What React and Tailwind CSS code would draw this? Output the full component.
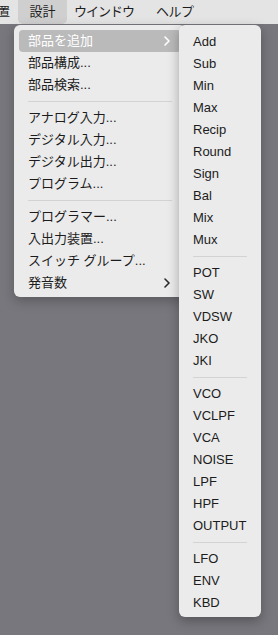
import React from 'react';

const mainItems = [
  { label: '部品を追加', sub: true, active: true },
  { label: '部品構成...' },
  { label: '部品検索...' },
  'sep',
  { label: 'アナログ入力...' },
  { label: 'デジタル入力...' },
  { label: 'デジタル出力...' },
  { label: 'プログラム...' },
  'sep',
  { label: 'プログラマー...' },
  { label: '入出力装置...' },
  { label: 'スイッチ グループ...' },
  { label: '発音数', sub: true },
];

const subItems = [
  'Add', 'Sub', 'Min', 'Max', 'Recip', 'Round', 'Sign', 'Bal', 'Mix', 'Mux',
  'sep',
  'POT', 'SW', 'VDSW', 'JKO', 'JKI',
  'sep',
  'VCO', 'VCLPF', 'VCA', 'NOISE', 'LPF', 'HPF', 'OUTPUT',
  'sep',
  'LFO', 'ENV', 'KBD',
];

const Chevron = ({ white }) => (
  <svg width="6" height="10" viewBox="0 0 6 10" fill="none">
    <path
      d="M1 1l4 4-4 4"
      stroke={white ? '#ffffff' : '#2a2a2a'}
      strokeWidth="1.6"
      strokeLinecap="round"
      strokeLinejoin="round"
    />
  </svg>
);

const font = { fontFamily: '"Liberation Sans", "Noto Sans CJK JP", sans-serif' };

export default function App() {
  return (
    <div
      className="relative w-[278px] h-[635px] overflow-hidden bg-[#77777d] text-[13px]"
      style={font}
    >
      {/* menu bar */}
      <div className="flex h-[24px] items-center whitespace-nowrap bg-[#e4e4e4] text-[13px] text-[#1e1e1e]">
        <span className="-ml-[3px] w-[21px]">置</span>
        <span className="flex h-[24px] w-[49px] items-center justify-center rounded-b-[5px] bg-[#cfcfcf]">
          設計
        </span>
        <span className="ml-[7px] tracking-[-1px]">ウインドウ</span>
        <span className="ml-[22px] tracking-[-0.5px]">ヘルプ</span>
      </div>

      {/* main dropdown */}
      <div className="absolute left-[14px] top-[25px] w-[172px] rounded-[6px] bg-[#ebebeb] pt-[5px] pb-[3px] px-[5px] shadow-[0_4px_12px_rgba(0,0,0,0.25)]">
        {mainItems.map((it, i) =>
          it === 'sep' ? (
            <div key={i} className="flex h-[11px] items-center px-[9px]">
              <div className="h-px w-full bg-[#d3d3d3]" />
            </div>
          ) : (
            <div
              key={i}
              className={`flex h-[22px] items-center justify-between rounded-[4px] pl-[9px] pr-[11px] ${
                it.active ? 'bg-[#bababa] text-white' : 'text-[#1c1c1c]'
              }`}
            >
              <span>{it.label}</span>
              {it.sub && <Chevron white={it.active} />}
            </div>
          )
        )}
      </div>

      {/* submenu */}
      <div className="absolute left-[179px] top-[25px] w-[82px] rounded-[6px] bg-[#ebebeb] pt-[6px] pb-[3px] shadow-[0_4px_12px_rgba(0,0,0,0.3)]">
        {subItems.map((it, i) =>
          it === 'sep' ? (
            <div key={i} className="flex h-[11px] items-center pl-[14px] pr-[14px]">
              <div className="h-px w-full bg-[#d3d3d3]" />
            </div>
          ) : (
            <div key={i} className="flex h-[22px] items-center pl-[14px] text-[#1c1c1c]">
              {it}
            </div>
          )
        )}
      </div>
    </div>
  );
}
